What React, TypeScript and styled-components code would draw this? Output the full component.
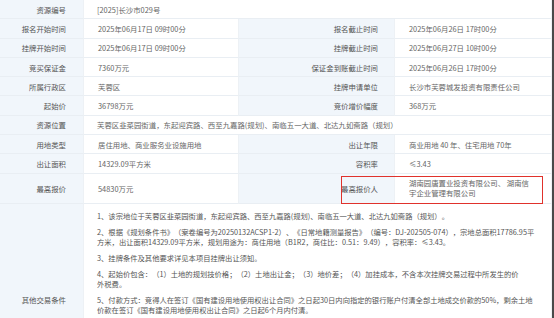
import React from "react";
import styled, { createGlobalStyle } from "styled-components";

const GlobalStyle = createGlobalStyle`
  html, body { margin: 0; padding: 0; background: #fff; }
  body { font-family: "Noto Sans CJK SC", "Noto Sans", sans-serif; }
`;

const Table = styled.div`
  position: relative;
  display: grid;
  grid-template-columns: 84px 155px 156px 157px;
  grid-template-rows: repeat(9, 19.3px) 30.3px minmax(192px, auto);
  width: 552px;
  border-right: 2px solid #4a4a4a;
  font-size: 7.4px;
  color: #666;
`;

const Cell = styled.div<{ $span?: number }>`
  box-sizing: border-box;
  display: flex;
  align-items: center;
  border-bottom: 1px solid #e9eef3;
  border-right: 1px solid #edf1f5;
  grid-column: span ${(p) => p.$span ?? 1};
  white-space: nowrap;
  overflow: hidden;
`;

const Label = styled(Cell)<{ $col2?: boolean }>`
  justify-content: flex-end;
  padding-right: ${(p) => (p.$col2 ? "16px" : "17px")};
  background: #f1f6fb;
  color: #555;
`;

const Value = styled(Cell)`
  background: #fff;
  padding-left: ${(p) => (p.$span && p.$span > 1 ? "13px" : "14px")};
`;

const WrapValue = styled(Value)`
  white-space: normal;
  padding-right: 20px;
  line-height: 10px;
`;

const Conditions = styled(Value)`
  display: block;
  white-space: pre-line;
  padding: 7px 4px 0 13px;
  color: #555;
`;

const Para = styled.p`
  margin: 0 0 6px;
  line-height: 10px;
  font-size: 7.3px;
  text-spacing-trim: space-all;
`;

const Highlight = styled.div`
  position: absolute;
  left: 341px;
  top: 176px;
  width: 202px;
  height: 28px;
  box-sizing: border-box;
  border: 1.5px solid #e0322c;
  pointer-events: none;
`;

type Row = [string, string, string, string];

const rows: Row[] = [
  ["报名开始时间", "2025年06月17日 09时00分", "报名截止时间", "2025年06月26日 17时00分"],
  ["挂牌开始时间", "2025年06月17日 09时00分", "挂牌截止时间", "2025年06月27日 10时00分"],
  ["竞买保证金", "7360万元", "保证金到账截止时间", "2025年06月26日 17时00分"],
  ["所属行政区", "芙蓉区", "挂牌申请单位", "长沙市芙蓉城发投资有限责任公司"],
  ["起始价", "36798万元", "竞价增价幅度", "368万元"],
];

const paras: string[][] = [
  ["1、该宗地位于芙蓉区韭菜园街道，东起迎宾路、西至九嘉路(规划)、南临五一大道、北达九如斋路（规划）。"],
  [
    "2、根据《规划条件书》（案卷编号为20250132ACSP1-2）、《日常地籍测量报告》（编号：DJ-202505-074），宗地总面积17786.95平",
    "方米，出让面积14329.09平方米，规划用途为：商住用地（B1R2，商住比：0.51：9.49），容积率：≤3.43。",
  ],
  ["3、挂牌条件及其他要求详见本项目挂牌出让须知。"],
  [
    "4、起始价包含：（1）土地的规划技价格；（2）土地出让金；（3）地价差；（4）加挂成本，不含本次挂牌交易过程中所发生的价",
    "外税费。",
  ],
  [
    "5、付款方式：竞得人在签订《国有建设用地使用权出让合同》之日起30日内向指定的银行账户付清全部土地成交价款的50%，剩余土地",
    "价款在签订《国有建设用地使用权出让合同》之日起6个月内付清。",
  ],
];

export default function App() {
  return (
    <>
      <GlobalStyle />
      <Table>
        <Label>资源编号</Label>
        <Value $span={3}>[2025]长沙市029号</Value>
        {rows.map(([a, b, c, d]) => (
          <React.Fragment key={a}>
            <Label>{a}</Label>
            <Value>{b}</Value>
            <Label $col2>{c}</Label>
            <Value>{d}</Value>
          </React.Fragment>
        ))}
        <Label>资源位置</Label>
        <Value $span={3}>芙蓉区韭菜园街道，东起迎宾路、西至九嘉路(规划)、南临五一大道、北达九如斋路（规划）</Value>
        <Label>用地类型</Label>
        <Value>居住用地、商业服务业设施用地</Value>
        <Label $col2>出让年限</Label>
        <Value>商业用地 40 年、住宅用地 70年</Value>
        <Label>出让面积</Label>
        <Value>14329.09平方米</Value>
        <Label $col2>容积率</Label>
        <Value>≤3.43</Value>
        <Label>最高报价</Label>
        <Value>54830万元</Value>
        <Label $col2>最高报价人</Label>
        <WrapValue>湖南园唐置业投资有限公司、 湖南信宇企业管理有限公司</WrapValue>
        <Label>其他交易条件</Label>
        <Conditions $span={3}>
          {paras.map((lines) => (
            <Para key={lines[0]}>{lines.join("\n")}</Para>
          ))}
        </Conditions>
        <Highlight />
      </Table>
    </>
  );
}
